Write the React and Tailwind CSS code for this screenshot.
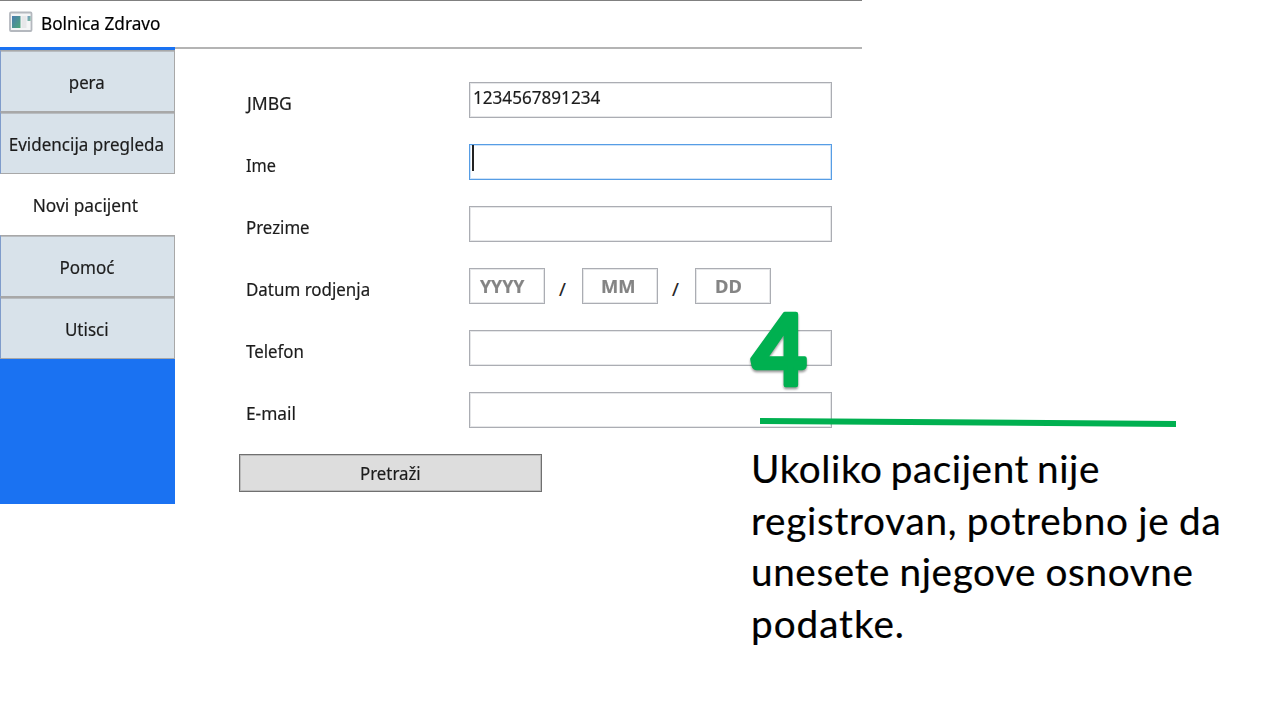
const tabs = [
  { label: "pera", h: "h-[62px]", text: "scale-x-[0.91]" },
  { label: "Evidencija pregleda", h: "h-[62px]", text: "scale-x-[0.92]" },
  { label: "Novi pacijent", h: "h-[61px]", text: "scale-x-[0.935] pr-[2px]", active: true },
  { label: "Pomoć", h: "h-[62px]", text: "scale-x-[0.92]" },
  { label: "Utisci", h: "h-[62px]", text: "scale-x-[0.92]" },
];

const fields = [
  { label: "JMBG", text: "scale-x-[0.95] pl-[1px]", value: "1234567891234" },
  { label: "Ime", text: "scale-x-[0.88]", focused: true },
  { label: "Prezime", text: "scale-x-[0.91]" },
  { label: "Datum rodjenja", text: "scale-x-[0.915]", date: true },
  { label: "Telefon", text: "scale-x-[0.91]" },
  { label: "E-mail", text: "scale-x-[0.935]" },
];

const note = [
  { text: "Ukoliko pacijent nije", spacing: "tracking-[0.6px] [word-spacing:-2.5px]" },
  { text: "registrovan, potrebno je da", spacing: "tracking-[0.72px] [word-spacing:-1px]" },
  { text: "unesete njegove osnovne", spacing: "tracking-[0.6px] [word-spacing:-1px]" },
  { text: "podatke.", spacing: "tracking-[0.95px]" },
];

function AppIcon() {
  return (
    <svg width="24" height="22" viewBox="0 0 24 22" className="shrink-0">
      <defs>
        <linearGradient id="pane" x1="0" y1="0" x2="1" y2="1">
          <stop offset="0" stopColor="#4a7bb0" />
          <stop offset="1" stopColor="#4fa878" />
        </linearGradient>
      </defs>
      <rect x="1" y="1.500" width="21.500" height="18.500" rx="1" fill="#f4f5f6" stroke="#b4b8be" strokeWidth="1.8" />
      <rect x="3" y="5" width="8.500" height="12" fill="url(#pane)" />
      <rect x="12.500" y="5" width="5" height="12" fill="#e6e7e9" />
      <rect x="18.500" y="5" width="3" height="5" fill="url(#pane)" opacity="0.75" />
    </svg>
  );
}

function DateInput() {
  const box = "flex h-[36px] w-[76px] border border-[#abadb3] shadow-[inset_0_0_0_1px_#e6e7e9] pt-[4px] text-[18.5px] font-bold leading-[26px] text-[#848484]";
  const slash = "w-[37px] pl-[14px] pt-[8px] leading-[26px]";
  return (
    <div className="flex">
      <div className={box + " pl-[10px]"}><span className="inline-block origin-left scale-x-[0.96]">YYYY</span></div>
      <div className={slash}>/</div>
      <div className={box + " pl-[18px]"}><span className="inline-block origin-left scale-x-[0.99]">MM</span></div>
      <div className={slash}>/</div>
      <div className={box + " pl-[18.5px]"}><span className="inline-block origin-left scale-x-[0.99]">DD</span></div>
    </div>
  );
}

export default function App() {
  return (
    <div className="relative h-[720px] w-[1280px] overflow-hidden bg-white">
      <div className="flex h-[504px] w-[862px] flex-col border-t border-[#808080] font-['Noto_Sans',sans-serif] text-[18.5px] text-[#1c1c1c] [-webkit-text-stroke:0.2px]">
        <header className="flex h-[46px] items-start gap-[8px] pl-[9px] pt-[10px]">
          <AppIcon />
          <span className="inline-block origin-left scale-x-[0.93] leading-[24px] text-black">Bolnica Zdravo</span>
        </header>
        <div className="flex flex-1">
          <nav className="flex w-[175px] flex-col border-t-[3px] border-[#1a72f2] bg-[#1a72f2]">
            {tabs.map((t) => (
              <div
                key={t.label}
                className={
                  "flex shrink-0 items-center justify-center whitespace-nowrap pr-[2px] pt-[1px] " + t.h +
                  (t.active ? " bg-white" : " border border-[#a8a8a8] border-l-[#7f9ccb] bg-[#d8e2ea] shadow-[inset_0_1px_0_#b8bcc0]")
                }
              >
                <span className={"inline-block " + t.text}>{t.label}</span>
              </div>
            ))}
          </nav>
          <main className="flex-1 border-t-2 border-[#b4b4b4] pl-[64px] pt-[33px]">
            {fields.map((f) => (
              <div key={f.label} className="flex h-[62px]">
                <div className="w-[230px] pl-[7px] pt-[8px] leading-[26px]">
                  <span className={"inline-block origin-left whitespace-nowrap " + f.text}>{f.label}</span>
                </div>
                {f.date ? (
                  <DateInput />
                ) : (
                  <div
                    className={
                      "h-[36px] w-[363px] border pl-[3px] leading-[28px] " +
                      (f.focused
                        ? "border-[#569de5] shadow-[inset_0_0_0_1px_#cfe3f8]"
                        : "border-[#abadb3] shadow-[inset_0_0_0_1px_#e6e7e9]")
                    }
                  >
                    {f.focused && <div className="-ml-[1px] h-[26px] w-[2px] bg-[#222222]" />}
                    {f.value && <span className="inline-block origin-left scale-x-[0.925]">{f.value}</span>}
                  </div>
                )}
              </div>
            ))}
            <button className="flex h-[38px] w-[303px] items-center justify-center border border-[#707070] bg-[#dddddd] shadow-[inset_0_0_0_1px_#bcbcbc]">
              <span className="inline-block scale-x-[0.91]">Pretraži</span>
            </button>
          </main>
        </div>
      </div>

      <svg className="absolute left-[740px] top-[270px]" width="450" height="190" viewBox="0 -30 450 190">
        <text
          x="12"
          y="85"
          fill="#00b050"
          stroke="#00b050"
          strokeWidth="4.5"
          strokeLinejoin="round"
          textLength="55"
          lengthAdjust="spacingAndGlyphs"
          className="font-['Lato',sans-serif] text-[98px] font-bold [filter:drop-shadow(0_2px_1px_rgba(0,0,0,0.4))]"
        >
          4
        </text>
        <path d="M20 121 L436 124" stroke="#00b050" strokeWidth="6" />
      </svg>

      <div className="absolute left-[751px] top-[443px] font-['Lato',sans-serif] text-[38.7px] leading-[51.5px] text-black [-webkit-text-stroke:0.2px]">
        {note.map((l) => (
          <div key={l.text} className={"whitespace-nowrap " + l.spacing}>
            {l.text}
          </div>
        ))}
      </div>
    </div>
  );
}
